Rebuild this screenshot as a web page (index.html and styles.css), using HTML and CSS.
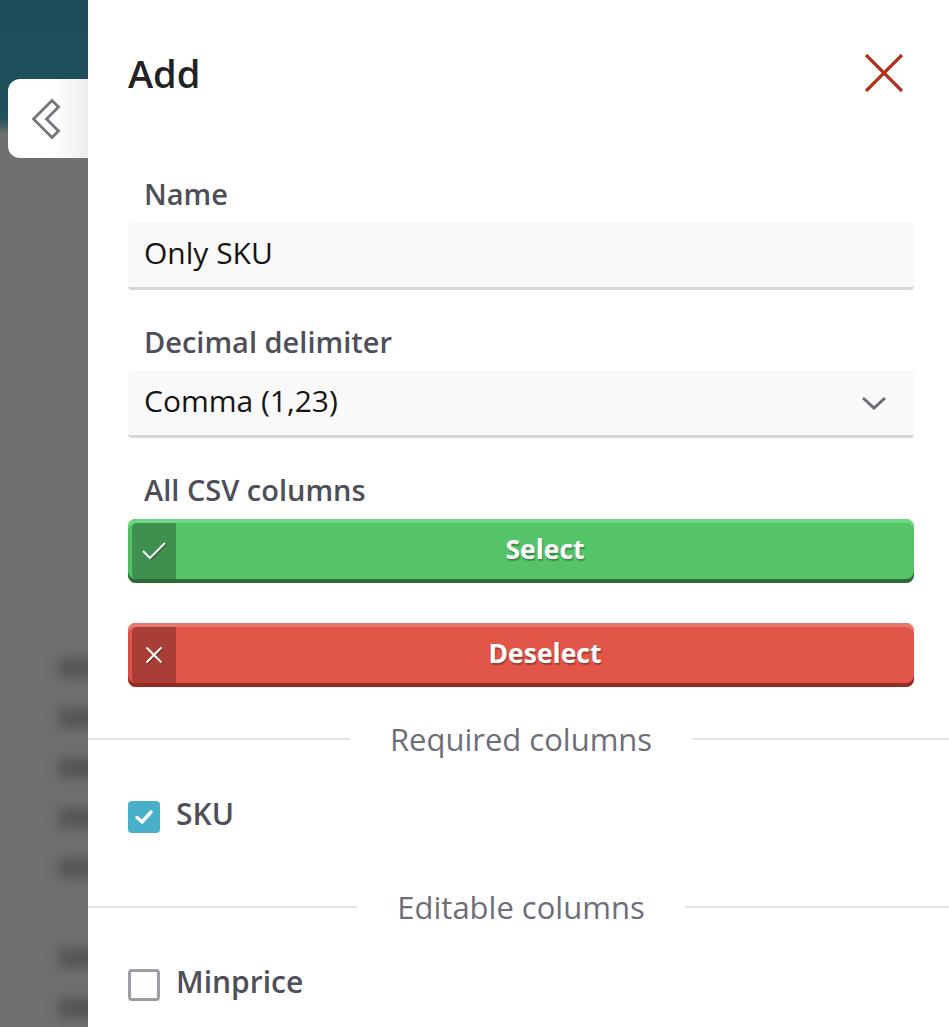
FILE: index.html
```html
<!DOCTYPE html>
<html lang="en">
<head>
<meta charset="utf-8">
<title>Add</title>
<link rel="stylesheet" href="styles.css">
</head>
<body>
<div class="backdrop">
  <div class="blur-rows">
    <div class="blur-row"></div>
    <div class="blur-row"></div>
    <div class="blur-row"></div>
    <div class="blur-row"></div>
    <div class="blur-row"></div>
    <div class="blur-row gap"></div>
    <div class="blur-row"></div>
  </div>
  <div class="back-tab">
    <svg width="30" height="42" viewBox="0 0 30 42"><polygon points="20,2.5 26.5,9 14.5,21 26.5,33 20,39.5 1.5,21" fill="none" stroke="#76757d" stroke-width="2.8" stroke-linejoin="miter"/></svg>
  </div>
</div>
<div class="panel">
  <div class="header">
    <h1 class="title">Add</h1>
    <svg class="close" width="40" height="40" viewBox="0 0 40 40"><path d="M2 2 L38 38 M38 2 L2 38" stroke="#b1321f" stroke-width="3.2" fill="none"/></svg>
  </div>

  <div class="field">
    <div class="label">Name</div>
    <div class="input">Only SKU</div>
  </div>

  <div class="field">
    <div class="label">Decimal delimiter</div>
    <div class="input select">
      <span>Comma (1,23)</span>
      <svg width="26" height="14" viewBox="0 0 26 14"><path d="M2 2 L13 12 L24 2" stroke="#6c6c76" stroke-width="3" fill="none"/></svg>
    </div>
  </div>

  <div class="field field-buttons">
    <div class="label">All CSV columns</div>
    <div class="btn btn-green">
      <span class="btn-icon"><svg width="26" height="20" viewBox="0 0 26 20"><path d="M2 10 L9 17 L24 2" stroke="#fff" stroke-width="2" fill="none"/></svg></span>
      <span class="btn-text">Select</span>
    </div>
  </div>

  <div class="btn btn-red">
    <span class="btn-icon"><svg width="18" height="18" viewBox="0 0 18 18"><path d="M1.5 1.5 L16.5 16.5 M16.5 1.5 L1.5 16.5" stroke="#fff" stroke-width="2" fill="none"/></svg></span>
    <span class="btn-text">Deselect</span>
  </div>

  <div class="divider"><span>Required columns</span></div>
  <div class="check-row">
    <span class="checkbox checked"><svg width="20" height="16" viewBox="0 0 20 16"><path d="M3 8.5 L8 13 L17 3" stroke="#fff" stroke-width="3.4" fill="none" stroke-linecap="round" stroke-linejoin="round"/></svg></span>
    <span class="check-label">SKU</span>
  </div>

  <div class="divider"><span>Editable columns</span></div>
  <div class="check-row">
    <span class="checkbox"></span>
    <span class="check-label">Minprice</span>
  </div>
</div>
</body>
</html>
```
FILE: styles.css
```css
html, body {
  margin: 0;
  padding: 0;
  overflow: hidden;
}
body {
  width: 949px;
  height: 1027px;
  display: flex;
  font-family: "Open Sans", "Noto Sans", sans-serif;
  background: #707070;
}
.backdrop {
  position: relative;
  width: 88px;
  flex-shrink: 0;
  overflow: hidden;
  background: linear-gradient(#1f4e5a 0, #20505b 118px, #707070 134px, #707070 100%);
}
.blur-rows {
  padding-top: 658px;
  padding-left: 58px;
  margin-right: -30px;
  filter: blur(6px);
}
.blur-row {
  height: 20px;
  margin-bottom: 30px;
  background: #555555;
}
.blur-row.gap {
  margin-top: 70px;
}
.back-tab {
  position: absolute;
  left: 8px;
  top: 79px;
  width: 80px;
  height: 79px;
  border-radius: 12px 0 0 12px;
  background: linear-gradient(to right, #ffffff 55%, #ededed 100%);
  display: flex;
  align-items: center;
  padding-left: 24px;
  box-sizing: border-box;
}
.panel {
  width: 866px;
  flex-shrink: 0;
  background: #fff;
  padding: 49px 40px 0;
  box-sizing: border-box;
}
.header {
  display: flex;
  justify-content: space-between;
  align-items: center;
  height: 48px;
  margin-bottom: 79px;
}
.title {
  margin: 0;
  font-size: 38px;
  line-height: 48px;
  font-weight: 600;
  color: #222226;
}
.close {
  margin-right: 10px;
}
.field {
  margin-bottom: 34px;
}
.field-buttons {
  margin-bottom: 40px;
}
.field-buttons .label {
  margin-bottom: 11px;
}
.label {
  font-size: 29px;
  line-height: 36px;
  font-weight: 600;
  color: #4f4f59;
  padding-left: 16px;
  margin-bottom: 10px;
}
.input {
  height: 68px;
  box-sizing: border-box;
  background: #f9f9f9;
  border-bottom: 3px solid #d6d6da;
  border-radius: 4px;
  padding: 0 17px 5px 16px;
  display: flex;
  align-items: center;
  font-size: 30px;
  color: #151515;
}
.select {
  justify-content: space-between;
  padding-right: 27px;
}
.select svg {
  margin-top: 5px;
}
.btn {
  height: 64px;
  box-sizing: border-box;
  border-radius: 8px;
  padding: 4px 0 4px 4px;
  display: flex;
  color: #fff;
}
.btn-green {
  background: #55c468;
  box-shadow: inset 0 4px 0 #6bd77e, inset 0 -4px 0 #2d6a37, inset 2px 0 0 #4fb862;
}
.btn-red {
  background: #e2564a;
  box-shadow: inset 0 4px 0 #e67870, inset 0 -4px 0 #952c24, inset 2px 0 0 #d44e43;
  margin-bottom: 32px;
}
.btn-icon {
  width: 44px;
  border-radius: 5px 0 0 4px;
  display: flex;
  align-items: center;
  justify-content: center;
}
.btn-icon svg {
  filter: drop-shadow(1px 1.5px 0 rgba(0,0,0,0.35));
}
.btn-green .btn-icon { background: #3f8f4f; }
.btn-red .btn-icon { background: #a83e35; }
.btn-text {
  flex: 1;
  display: flex;
  align-items: center;
  justify-content: center;
  padding-bottom: 4px;
  font-size: 26.5px;
  font-weight: 700;
  text-shadow: 1px 2px 1px rgba(0,0,0,0.3);
}
.divider {
  margin: 0 -40px;
  height: 40px;
  display: flex;
  align-items: center;
  font-size: 31px;
  color: #6e6e78;
}
.divider::before,
.divider::after {
  content: "";
  flex: 1;
  height: 2px;
  background: #e3e3e6;
}
.divider span {
  padding: 0 40px;
}
.check-row {
  height: 60px;
  margin: 28px 0 40px;
  display: flex;
  align-items: center;
  gap: 16px;
}
.checkbox {
  width: 32px;
  height: 32px;
  box-sizing: border-box;
  border-radius: 4px;
  border: 3px solid #9d9da5;
  background: #fff;
  display: flex;
  align-items: center;
  justify-content: center;
}
.checkbox.checked {
  border: none;
  background: #48b1c9;
}
.check-label {
  font-size: 30px;
  font-weight: 600;
  color: #4f4f59;
  padding-bottom: 7px;
}
```
